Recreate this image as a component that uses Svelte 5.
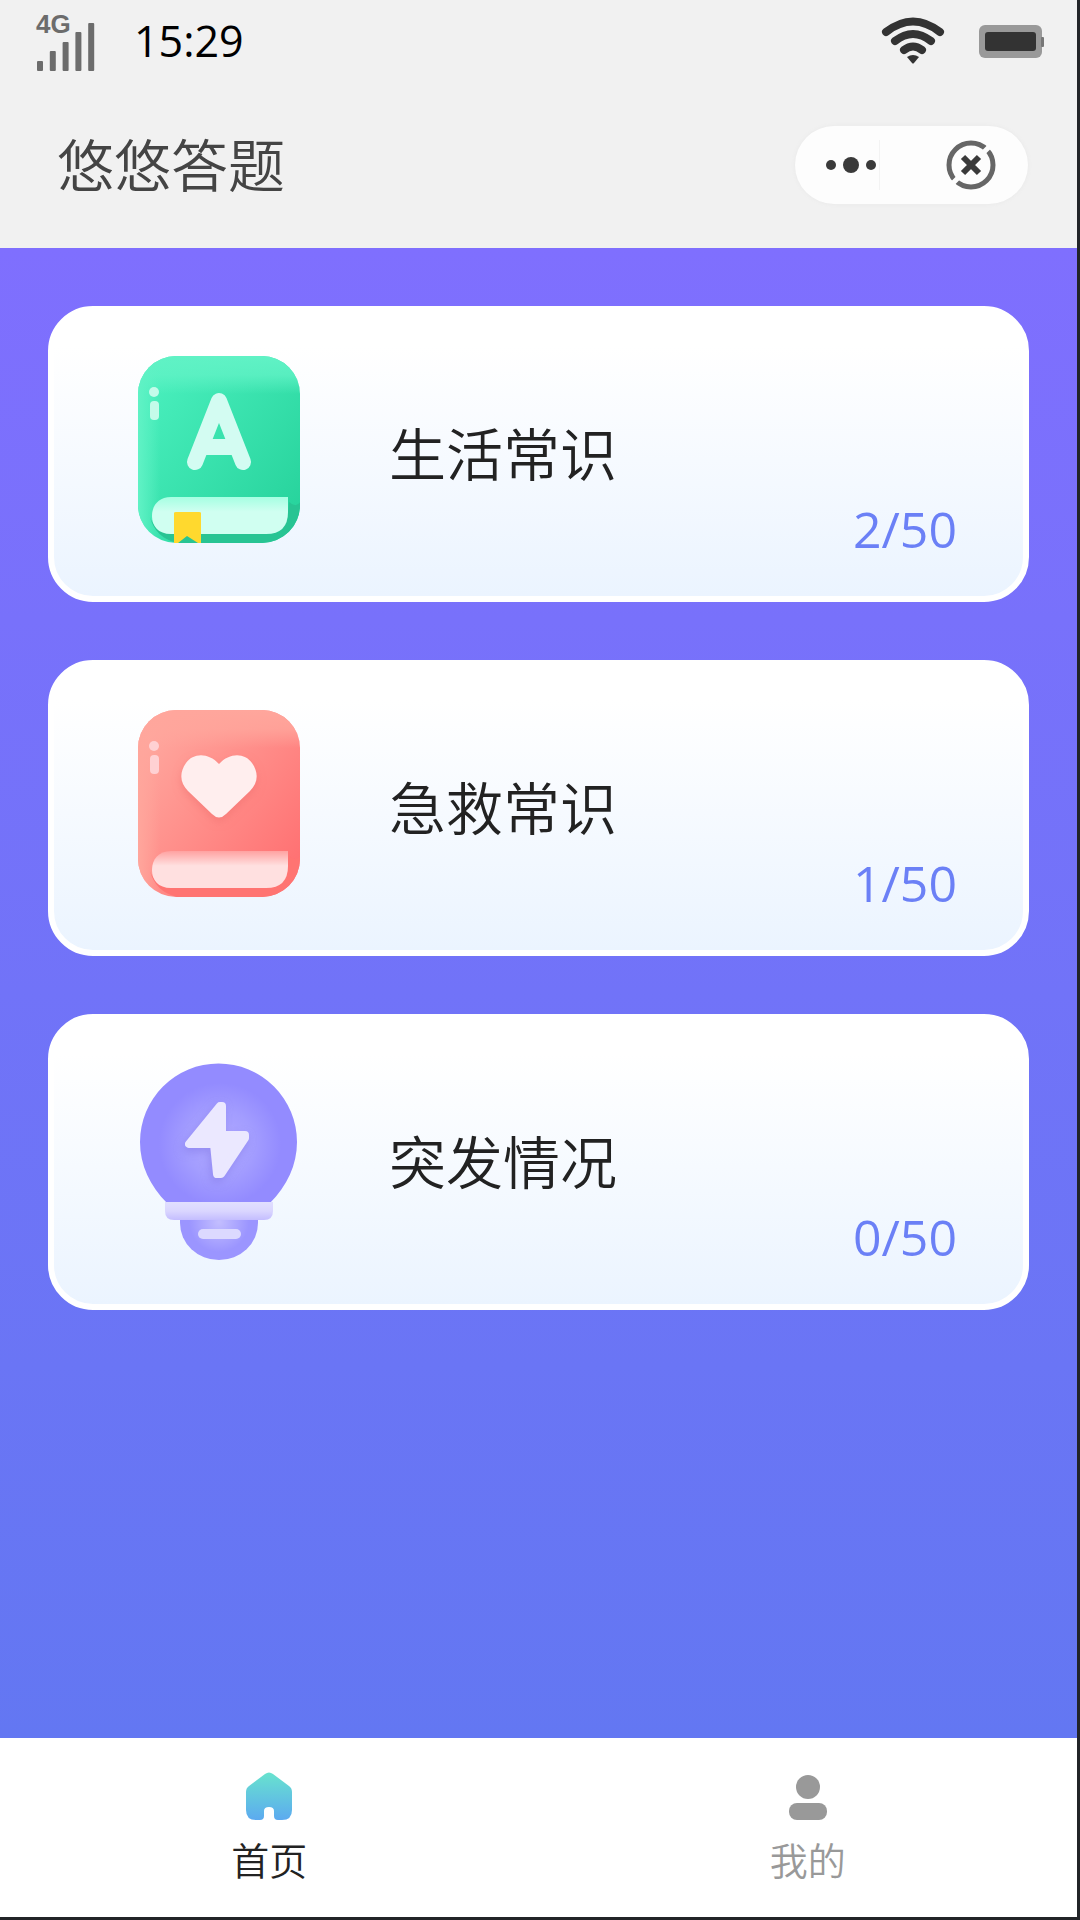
<script lang="ts">
	interface Category {
		id: 'life' | 'aid' | 'emergency';
		name: string;
		done: number;
		total: number;
	}

	const categories: Category[] = [
		{ id: 'life', name: '生活常识', done: 2, total: 50 },
		{ id: 'aid', name: '急救常识', done: 1, total: 50 },
		{ id: 'emergency', name: '突发情况', done: 0, total: 50 }
	];

	const bars = [10, 20, 29, 39, 48];

	let tab = $state('home');
</script>

<div class="app">
	<header>
		<div class="status">
			<svg class="signal" width="64" height="64" viewBox="0 0 64 64" aria-hidden="true">
				<text x="1" y="24">4G</text>
				{#each bars as h, i}
					<rect x={2 + i * 12.8} y={62 - h} width="6" height={h} rx="1" />
				{/each}
			</svg>
			<span class="time">15:29</span>
			<svg class="wifi" width="64" height="48" viewBox="0 0 64 48" aria-hidden="true">
				<path d="M5 15Q32 -6 59 15M14 24Q32 10 50 24M23 33Q32 26 41 33" />
				<path class="tip" d="M26 40Q32 36 38 40L33 46Q32 47 31 46Z" />
			</svg>
			<svg width="68" height="36" viewBox="0 0 68 36" aria-hidden="true">
				<rect x="2" y="2" width="63" height="33" rx="6" fill="#999" />
				<rect x="64" y="14" width="3" height="10" rx="1" fill="#777" />
				<rect x="8" y="9" width="51" height="19" rx="3" fill="#333" />
			</svg>
		</div>
		<div class="titlebar">
			<h1>悠悠答题</h1>
			<div class="capsule">
				<button class="more" aria-label="更多">
					<svg width="56" height="24" viewBox="0 0 56 24">
						<circle cx="8" cy="12" r="5" />
						<circle cx="28" cy="12" r="8" />
						<circle cx="48" cy="12" r="5" />
					</svg>
				</button>
				<button class="close" aria-label="关闭">
					<svg width="52" height="52" viewBox="0 0 52 52">
						<circle cx="26" cy="26" r="22" />
						<path class="cut" d="M39 13L45 7M7 45L13 39" />
						<path class="cross" d="M18 18L34 34M34 18L18 34" />
					</svg>
				</button>
			</div>
		</div>
	</header>

	<main>
		{#each categories as c (c.id)}
			<button class="card">
				<svg width="164" height="200" viewBox="0 0 164 200" aria-hidden="true">
					{#if c.id === 'emergency'}
						<defs>
							<radialGradient id="glow" gradientUnits="userSpaceOnUse" cx="82" cy="82" r="68">
								<stop offset="0" stop-color="#b1aaff" />
								<stop offset="0.5" stop-color="#a39dff" />
								<stop offset="0.9" stop-color="#938bff" />
							</radialGradient>
							<radialGradient id="base-glow" gradientUnits="userSpaceOnUse" cx="81" cy="160" r="30">
								<stop offset="0" stop-color="#c3beff" />
								<stop offset="1" stop-color="#9b95ff" />
							</radialGradient>
							<linearGradient id="collar" x2="0" y2="1">
								<stop offset="0" stop-color="#e1dfff" />
								<stop offset="0.5" stop-color="#dad6ff" />
								<stop offset="1" stop-color="#c4bdff" />
							</linearGradient>
						</defs>
						<path
							d="M29 141C12 124 2 103 2 80A78.500 78.500 0 0 1 159 80C159 103 149 124 132 141Z"
							fill="url(#glow)"
						/>
						<path d="M42 158H120V161A39 37 0 0 1 42 161Z" fill="url(#base-glow)" />
						<path
							d="M27 140H135V149Q135 158 126 158H36Q27 158 27 149Z"
							fill="url(#collar)"
						/>
						<rect x="60" y="167" width="43" height="10" rx="5" fill="#dcd9ff" />
						<path class="emblem bolt" d="M82 44L51 82H76L79 112H83L107 76V73H84V44Z" />
					{:else}
						<defs>
							<linearGradient id="{c.id}-cover" x1="0.1" y1="0.1" x2="1" y2="0.9">
								<stop offset="0" class="{c.id}-light" />
								<stop offset="1" class="{c.id}-deep" />
							</linearGradient>
							<linearGradient id="{c.id}-top" x2="0" y2="1">
								<stop offset="0" class="{c.id}-sheen" />
								<stop offset="0.5" class="{c.id}-sheen" stop-opacity="0.8" />
								<stop offset="1" class="{c.id}-sheen" stop-opacity="0" />
							</linearGradient>
							<linearGradient id="{c.id}-side">
								<stop offset="0" class="{c.id}-sheen" />
								<stop offset="1" class="{c.id}-sheen" stop-opacity="0" />
							</linearGradient>
							<linearGradient id="{c.id}-pages" x2="0" y2="1">
								<stop offset="0" class="{c.id}-edge" />
								<stop offset="0.4" class="{c.id}-paper" />
								<stop offset="1" class="{c.id}-paper" />
							</linearGradient>
							<clipPath id="{c.id}-clip">
								<rect y="2" width="162" height="187" rx="38" />
							</clipPath>
						</defs>
						<g clip-path="url(#{c.id}-clip)">
							<rect y="2" width="162" height="187" fill="url(#{c.id}-cover)" />
							<rect y="2" width="162" height="38" fill="url(#{c.id}-top)" />
							<rect y="2" width="22" height="187" fill="url(#{c.id}-side)" />
							<path
								class="{c.id}-rim"
								d="M12 163Q18 180 36 180H128Q150 180 151 148Q160 156 164 144V190H44Q18 186 12 163Z"
							/>
						</g>
						<path
							d="M33 143H150V158Q150 180 128 180H33C20 180 14 172 14 162S20 143 33 143Z"
							fill="url(#{c.id}-pages)"
						/>
						<g class="{c.id}-mark">
							<circle cx="16" cy="38" r="5" />
							<rect x="12" y="47" width="9" height="19" rx="4" />
						</g>
						{#if c.id === 'life'}
							<path class="emblem letter" d="M57 108L81 47L105 108M66 93H96" />
							<path d="M36 159Q36 158 38 158H61Q63 158 63 159V189H60L49 182L40 189H36Z" fill="#ffd92e" />
						{:else}
							<path
								class="emblem heart"
								d="M81 56C92 44 107 45 114 55C121 65 120 75 112 83L88 106Q81 113 74 106L50 83C42 75 41 65 48 55C55 45 70 44 81 56Z"
							/>
						{/if}
					{/if}
				</svg>
				<span class="name">{c.name}</span>
				<span class="count">{c.done}/{c.total}</span>
			</button>
		{/each}
	</main>

	<nav>
		<a href="#home" class:active={tab === 'home'} onclick={() => (tab = 'home')}>
			<svg width="56" height="56" viewBox="0 0 56 56" aria-hidden="true">
				<linearGradient id="home" x2="0" y2="1">
					<stop offset="0" stop-color="#68e3ce" />
					<stop offset="1" stop-color="#5caaf0" />
				</linearGradient>
				<path
					d="M24 4Q28 1 32 4L48 16Q51 18 51 22V40Q51 50 41 50H37Q33 50 33 46V41Q33 37 28 37T23 41V46Q23 50 19 50H15Q5 50 5 40V22Q5 18 8 16Z"
					fill="url(#home)"
				/>
			</svg>
			首页
		</a>
		<a href="#mine" class:active={tab === 'mine'} onclick={() => (tab = 'mine')}>
			<svg width="56" height="56" viewBox="0 0 56 56" aria-hidden="true" fill="#999">
				<circle cx="28" cy="17" r="12" />
				<rect x="9" y="33" width="38" height="17" rx="8" />
			</svg>
			我的
		</a>
	</nav>
</div>

<style>
	:global(body) {
		margin: 0;
	}
	.app {
		display: flex;
		flex-direction: column;
		box-sizing: border-box;
		min-height: 100vh;
		border: solid #222428;
		border-width: 0 3px 3px 0;
		background: #fff;
		font-family: 'Open Sans', 'Noto Sans CJK SC', sans-serif;
	}
	button {
		padding: 0;
		border: 0;
		background: none;
		font: inherit;
		cursor: pointer;
	}
	svg {
		flex: none;
		display: block;
	}
	header {
		display: flex;
		flex-direction: column;
		gap: 44px;
		padding-bottom: 44px;
		background: #f1f1f1;
	}
	.status {
		display: flex;
		align-items: center;
		height: 82px;
		padding: 0 32px 0 35px;
	}
	.signal {
		fill: #6c6c6c;
	}
	.signal text {
		font: bold 26px 'Liberation Sans', sans-serif;
	}
	.time {
		margin: 0 auto 0 35px;
		font-size: 43px;
		line-height: 60px;
		color: #000;
	}
	.wifi {
		margin-right: 32px;
		fill: none;
		stroke: #333;
		stroke-width: 8px;
		stroke-linecap: round;
	}
	.wifi .tip {
		fill: #333;
		stroke: none;
	}
	.titlebar {
		display: flex;
		align-items: center;
		justify-content: space-between;
		height: 78px;
		padding: 0 49px 0 57px;
	}
	h1 {
		margin: 0;
		font-size: 57px;
		font-weight: 350;
		line-height: 78px;
		color: #444;
	}
	.capsule {
		display: flex;
		align-items: center;
		width: 233px;
		height: 78px;
		border-radius: 39px;
		background: #fdfdfd;
		box-shadow: 0 0 4px #e8e8e8;
	}
	.more {
		display: flex;
		align-items: center;
		height: 50px;
		padding-left: 28px;
		border-right: 1px solid #f3f3f3;
		fill: #3a3a3a;
	}
	.close {
		margin: 0 31px 0 auto;
		fill: none;
		stroke: #666;
		stroke-width: 5px;
	}
	.close .cut {
		stroke: #fdfdfd;
	}
	.close .cross {
		stroke: #3a3a3a;
		stroke-width: 6px;
	}
	main {
		flex: 1;
		display: flex;
		flex-direction: column;
		gap: 58px;
		padding: 58px 48px;
		background: linear-gradient(#7f6ffe, #6377f2);
	}
	.card {
		display: flex;
		align-items: center;
		box-sizing: border-box;
		height: 296px;
		padding: 0 66px 0 84px;
		border: 6px solid #fff;
		border-radius: 45px;
		background: linear-gradient(#fff 12%, #ebf4ff);
		text-align: left;
	}
	.name {
		flex: 1;
		margin-left: 87px;
		font-size: 57px;
		font-weight: 350;
		line-height: 80px;
		color: #222;
	}
	.count {
		align-self: flex-end;
		margin-bottom: 37px;
		font-size: 50px;
		line-height: 60px;
		color: #6b80f6;
	}

	/* Book covers */
	.life-light { stop-color: #49efbd; }
	.life-deep { stop-color: #26d29b; }
	.life-sheen { stop-color: #60f2c5; }
	.life-edge { stop-color: #a5ffe2; }
	.life-paper { stop-color: #d0fff1; }
	.life-rim { fill: #28c493; }
	.life-mark { fill: #c4fbea; }
	.aid-light { stop-color: #ffa79e; }
	.aid-deep { stop-color: #ff6e70; }
	.aid-sheen { stop-color: #ffa69c; }
	.aid-edge { stop-color: #ffa2a1; }
	.aid-paper { stop-color: #ffe0e0; }
	.aid-rim { fill: #ff7472; }
	.aid-mark { fill: #ffd1d3; }
	.emblem {
		stroke-linecap: round;
		stroke-linejoin: round;
	}
	.letter {
		fill: none;
		stroke: #d3fcf2;
		stroke-width: 16px;
	}
	.heart {
		fill: #ffeeee;
		filter: drop-shadow(0 4px 4px #f0706e88);
	}
	.bolt {
		fill: #ebe8ff;
		stroke: #ebe8ff;
		stroke-width: 8px;
		filter: drop-shadow(-2px 4px 4px #8178e688);
	}

	nav {
		display: flex;
		height: 179px;
		background: #fff;
	}
	nav a {
		flex: 1;
		display: flex;
		flex-direction: column;
		align-items: center;
		gap: 6px;
		padding-top: 32px;
		font-size: 38px;
		font-weight: 350;
		line-height: 56px;
		color: #999;
		text-decoration: none;
	}
	nav a.active {
		color: #222;
	}
</style>
